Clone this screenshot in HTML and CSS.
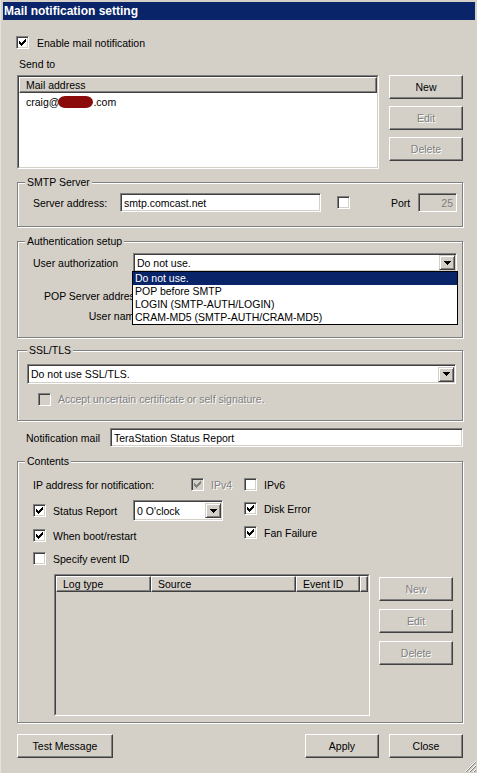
FILE: index.html
```html
<!DOCTYPE html>
<html lang="en">
<head>
<meta charset="utf-8">
<title>Mail notification setting</title>
<link rel="stylesheet" href="styles.css">
</head>
<body>
<div class="window">
  <div class="titlebar">Mail notification setting</div>
  <div class="content">
    <div class="check-row enable">
      <span class="cb"><svg viewBox="0 0 7 7" shape-rendering="crispEdges"><path d="M6 0h1v1h-1z M5 1h2v1h-2z M0 2h1v1h-1z M4 2h3v1h-3z M0 3h2v1h-2z M3 3h3v1h-3z M0 4h5v1h-5z M1 5h3v1h-3z M2 6h1v1h-1z"/></svg></span>
      <span class="cb-text">Enable mail notification</span>
    </div>
    <div class="sendto-label">Send to</div>
    <div class="sendto">
      <div class="sunken-outer mail-list">
        <div class="sunken-inner white">
          <div class="lv-header">
            <div class="lv-col col-full">Mail address</div>
          </div>
          <div class="lv-item">craig@<span class="redact"></span>.com</div>
        </div>
      </div>
      <div class="btn-col">
        <button class="btn">New</button>
        <button class="btn disabled">Edit</button>
        <button class="btn disabled">Delete</button>
      </div>
    </div>

    <fieldset class="group smtp">
      <legend>SMTP Server</legend>
      <div class="smtp-row">
        <span class="lbl-server">Server address:</span>
        <input class="field in-server" type="text" value="smtp.comcast.net">
        <span class="cb cb-ssl-opt"></span>
        <span class="lbl-port">Port</span>
        <input class="field field-dis in-port" type="text" value="25" readonly>
      </div>
    </fieldset>

    <fieldset class="group auth">
      <legend>Authentication setup</legend>
      <div class="auth-row">
        <span class="lbl-auth">User authorization</span>
        <div class="combo combo-auth">
          <span class="combo-text">Do not use.</span>
          <span class="combo-btn"><svg viewBox="0 0 7 4" shape-rendering="crispEdges"><path d="M0 0h7v1h-7z M1 1h5v1h-5z M2 2h3v1h-3z M3 3h1v1h-1z"/></svg></span>
          <ul class="dropdown">
            <li class="sel">Do not use.</li>
            <li>POP before SMTP</li>
            <li>LOGIN (SMTP-AUTH/LOGIN)</li>
            <li>CRAM-MD5 (SMTP-AUTH/CRAM-MD5)</li>
          </ul>
        </div>
      </div>
      <div class="auth-row pop-row">
        <span class="lbl-clip"><span class="lbl-right">POP Server address:</span></span>
      </div>
      <div class="auth-row user-row">
        <span class="lbl-clip"><span class="lbl-right">User name:</span></span>
      </div>
    </fieldset>

    <fieldset class="group ssl">
      <legend>SSL/TLS</legend>
      <div class="combo combo-ssl">
        <span class="combo-text">Do not use SSL/TLS.</span>
        <span class="combo-btn"><svg viewBox="0 0 7 4" shape-rendering="crispEdges"><path d="M0 0h7v1h-7z M1 1h5v1h-5z M2 2h3v1h-3z M3 3h1v1h-1z"/></svg></span>
      </div>
      <div class="check-row ssl-check">
        <span class="cb disabled"></span>
        <span class="cb-text gray">Accept uncertain certificate or self signature.</span>
      </div>
    </fieldset>

    <div class="notif-row">
      <span class="lbl-notif">Notification mail</span>
      <input class="field in-notif" type="text" value="TeraStation Status Report">
    </div>

    <fieldset class="group contents">
      <legend>Contents</legend>
      <div class="contents-top">
        <div class="col-left">
          <div class="c-row r1">
            <span class="lbl-ip">IP address for notification:</span>
            <span class="cb disabled"><svg viewBox="0 0 7 7" shape-rendering="crispEdges"><path d="M6 0h1v1h-1z M5 1h2v1h-2z M0 2h1v1h-1z M4 2h3v1h-3z M0 3h2v1h-2z M3 3h3v1h-3z M0 4h5v1h-5z M1 5h3v1h-3z M2 6h1v1h-1z"/></svg></span>
            <span class="cb-text gray">IPv4</span>
          </div>
          <div class="c-row r2">
            <span class="cb"><svg viewBox="0 0 7 7" shape-rendering="crispEdges"><path d="M6 0h1v1h-1z M5 1h2v1h-2z M0 2h1v1h-1z M4 2h3v1h-3z M0 3h2v1h-2z M3 3h3v1h-3z M0 4h5v1h-5z M1 5h3v1h-3z M2 6h1v1h-1z"/></svg></span>
            <span class="cb-text lbl-status">Status Report</span>
            <div class="combo combo-status">
              <span class="combo-text">0 O'clock</span>
              <span class="combo-btn"><svg viewBox="0 0 7 4" shape-rendering="crispEdges"><path d="M0 0h7v1h-7z M1 1h5v1h-5z M2 2h3v1h-3z M3 3h1v1h-1z"/></svg></span>
            </div>
          </div>
          <div class="c-row r3">
            <span class="cb"><svg viewBox="0 0 7 7" shape-rendering="crispEdges"><path d="M6 0h1v1h-1z M5 1h2v1h-2z M0 2h1v1h-1z M4 2h3v1h-3z M0 3h2v1h-2z M3 3h3v1h-3z M0 4h5v1h-5z M1 5h3v1h-3z M2 6h1v1h-1z"/></svg></span>
            <span class="cb-text">When boot/restart</span>
          </div>
          <div class="c-row r4">
            <span class="cb"></span>
            <span class="cb-text">Specify event ID</span>
          </div>
        </div>
        <div class="col-right">
          <div class="c-row r1">
            <span class="cb"></span>
            <span class="cb-text">IPv6</span>
          </div>
          <div class="c-row rr2">
            <span class="cb"><svg viewBox="0 0 7 7" shape-rendering="crispEdges"><path d="M6 0h1v1h-1z M5 1h2v1h-2z M0 2h1v1h-1z M4 2h3v1h-3z M0 3h2v1h-2z M3 3h3v1h-3z M0 4h5v1h-5z M1 5h3v1h-3z M2 6h1v1h-1z"/></svg></span>
            <span class="cb-text">Disk Error</span>
          </div>
          <div class="c-row rr3">
            <span class="cb"><svg viewBox="0 0 7 7" shape-rendering="crispEdges"><path d="M6 0h1v1h-1z M5 1h2v1h-2z M0 2h1v1h-1z M4 2h3v1h-3z M0 3h2v1h-2z M3 3h3v1h-3z M0 4h5v1h-5z M1 5h3v1h-3z M2 6h1v1h-1z"/></svg></span>
            <span class="cb-text">Fan Failure</span>
          </div>
        </div>
      </div>
      <div class="event-row">
        <div class="sunken-outer event-list">
          <div class="sunken-inner">
            <div class="lv-header">
              <div class="lv-col col-logtype">Log type</div>
              <div class="lv-col col-source">Source</div>
              <div class="lv-col col-eventid">Event ID</div>
              <div class="lv-col col-fill"></div>
            </div>
          </div>
        </div>
        <div class="btn-col event-btns">
          <button class="btn disabled">New</button>
          <button class="btn disabled">Edit</button>
          <button class="btn disabled">Delete</button>
        </div>
      </div>
    </fieldset>

    <div class="bottom-row">
      <button class="btn btn-test">Test Message</button>
      <div class="spacer"></div>
      <button class="btn">Apply</button>
      <button class="btn">Close</button>
    </div>
  </div>
  <svg class="grip" viewBox="0 0 13 13" shape-rendering="crispEdges">
    <path d="M12 1 L1 12" stroke="#ffffff" stroke-width="1"/>
    <path d="M12 2 L2 12" stroke="#808080" stroke-width="1.4"/>
    <path d="M12 5 L5 12" stroke="#ffffff" stroke-width="1"/>
    <path d="M12 6 L6 12" stroke="#808080" stroke-width="1.4"/>
    <path d="M12 9 L9 12" stroke="#ffffff" stroke-width="1"/>
    <path d="M12 10 L10 12" stroke="#808080" stroke-width="1.4"/>
  </svg>
</div>
</body>
</html>
```

FILE: styles.css
```css
* { box-sizing: border-box; }
html, body { margin: 0; padding: 0; }
body {
  width: 477px;
  height: 773px;
  background: #d4d0c8;
  font-family: "Liberation Sans", Arial, sans-serif;
  font-size: 10.5px;
  color: #000;
  overflow: hidden;
}
.window {
  position: relative;
  width: 477px;
  height: 773px;
  padding: 2px 2px 0 3px;
  border-left: 1px solid #e4e2dc;
}
.titlebar {
  height: 18px;
  line-height: 18px;
  background: #0a246a;
  color: #fff;
  font-weight: bold;
  font-size: 12px;
  padding-left: 1px;
  margin-left: -1px;
}
.content { padding: 0 12px 0 13px; }

/* checkbox */
.check-row, .c-row { display: flex; align-items: center; height: 17px; }
.cb {
  flex: none;
  width: 13px;
  height: 13px;
  border: 1px solid;
  border-color: #808080 #fff #fff #808080;
  box-shadow: inset 1px 1px 0 #404040, inset -1px -1px 0 #d4d0c8;
  background: #fff;
  display: flex;
  align-items: center;
  justify-content: center;
}
.cb svg { width: 7px; height: 7px; display: block; fill: #000; }
.cb.disabled { background: #d4d0c8; }
.cb.disabled svg { fill: #808080; }
.cb-text { margin-left: 7px; white-space: nowrap; }
.gray { color: #808080; text-shadow: 1px 1px 0 #fff; }

.enable { margin-top: 14px; margin-left: -1px; }
.enable .cb-text { margin-left: 8px; }
.sendto-label { margin-top: 7px; line-height: 13px; padding-left: 2px; }

/* send to */
.sendto { margin-top: 4px; display: flex; gap: 10px; height: 94px; }
.sunken-outer {
  border: 1px solid;
  border-color: #808080 #fff #fff #808080;
}
.sunken-inner {
  height: 100%;
  border: 1px solid;
  border-color: #404040 #d4d0c8 #d4d0c8 #404040;
}
.sunken-inner.white { background: #fff; }
.mail-list { width: 363px; height: 94px; }
.lv-header { display: flex; height: 16px; }
.lv-col {
  height: 16px;
  line-height: 14px;
  padding-left: 6px;
  background: #d4d0c8;
  border: 1px solid;
  border-color: #fff #404040 #404040 #fff;
  box-shadow: inset -1px -1px 0 #808080;
  white-space: nowrap;
  overflow: hidden;
}
.col-full { flex: 1; }
.lv-item { padding: 3px 0 0 7px; line-height: 13px; white-space: nowrap; }
.redact {
  display: inline-block;
  width: 35px;
  height: 12px;
  vertical-align: -2px;
  background: #8b0a0a;
  border-radius: 7px / 6px;
  margin-left: -1px;
}

/* buttons */
.btn-col { display: flex; flex-direction: column; gap: 7px; width: 74px; }
.btn {
  width: 74px;
  height: 24px;
  margin: 0;
  padding: 0;
  font: inherit;
  color: #000;
  background: #d4d0c8;
  border: 1px solid;
  border-color: #fff #404040 #404040 #fff;
  box-shadow: inset -1px -1px 0 #808080;
  border-radius: 0;
}
.btn.disabled { color: #808080; text-shadow: 1px 1px 0 #fff; }

/* group boxes */
.group {
  margin: 0;
  padding: 0;
  width: 446px;
  min-width: 0;
  border: 1px solid #808080;
  box-shadow: inset 1px 1px 0 #fff, 1px 1px 0 #fff;
}
.group legend {
  font: inherit;
  line-height: 13px;
  padding: 0 2px;
  margin-left: -8px;
  background: #d4d0c8;
}

/* fields */
.field {
  height: 19px;
  margin: 0;
  padding: 0 0 0 3px;
  font: inherit;
  color: #000;
  background: #fff;
  border: 1px solid;
  border-color: #808080 #fff #fff #808080;
  box-shadow: inset 1px 1px 0 #404040, inset -1px -1px 0 #d4d0c8;
  border-radius: 0;
  outline: none;
}
.field-dis { background: #d4d0c8; color: #808080; text-align: right; padding: 0 3px 0 0; }

/* smtp */
.smtp { margin-top: 7px; padding: 4px 0 14px 15px; }
.smtp-row { display: flex; align-items: center; height: 19px; }
.lbl-server { width: 87px; flex: none; }
.in-server { width: 201px; }
.cb-ssl-opt { margin-left: 16px; }
.lbl-port { margin-left: 41px; width: 27px; flex: none; }
.in-port { width: 39px; }

/* auth */
.auth { margin-top: 8px; padding: 5px 0 12px 15px; }
.auth-row { display: flex; align-items: center; height: 19px; }
.pop-row { margin-top: 14px; }
.user-row { margin-top: 2px; height: 18px; }
.lbl-auth { width: 100px; flex: none; }
.lbl-clip { width: 99px; flex: none; overflow: hidden; white-space: nowrap; }
.lbl-right { display: block; width: 110px; text-align: right; white-space: nowrap; }

.combo {
  position: relative;
  display: flex;
  align-items: center;
  background: #fff;
  border: 1px solid;
  border-color: #808080 #fff #fff #808080;
  box-shadow: inset 1px 1px 0 #404040, inset -1px -1px 0 #d4d0c8;
}
.combo-text { flex: 1; padding-left: 3px; white-space: nowrap; }
.combo-btn {
  flex: none;
  width: 16px;
  height: 15px;
  margin-right: 1px;
  background: #d4d0c8;
  border: 1px solid;
  border-color: #d4d0c8 #404040 #404040 #d4d0c8;
  box-shadow: inset 1px 1px 0 #fff, inset -1px -1px 0 #808080;
  display: flex;
  align-items: center;
  justify-content: center;
}
.combo-btn svg { width: 7px; height: 4px; display: block; fill: #000; }
.combo-auth { width: 324px; height: 19px; }
.dropdown {
  position: absolute;
  z-index: 10;
  top: 100%;
  left: -2px;
  width: 326px;
  margin: 0;
  padding: 0;
  list-style: none;
  background: #fff;
  border: 1px solid #000;
}
.dropdown li { height: 13px; line-height: 13px; padding-left: 2px; white-space: nowrap; }
.dropdown li.sel { background: #0a246a; color: #fff; }

/* ssl */
.ssl { margin-top: 6px; padding: 7px 5px 13px 9px; }
.ssl legend { margin-left: 0; }
.combo-ssl { width: 429px; height: 20px; }
.ssl-check { margin-top: 7px; margin-left: 11px; height: 16px; }

/* notification */
.notif-row { display: flex; align-items: center; margin-top: 7px; padding-left: 9px; height: 19px; }
.lbl-notif { width: 84px; flex: none; }
.in-notif { width: 353px; }

/* contents */
.contents { margin-top: 8px; padding: 8px 0 6px 15px; }
.contents-top { display: grid; grid-template-columns: 211px auto; }
.lbl-ip { width: 158px; flex: none; }
.col-left .r2 { margin-top: 7px; height: 21px; }
.col-left .r3 { margin-top: 6px; }
.col-left .r4 { margin-top: 6px; }
.col-right .rr2 { margin-top: 7px; }
.col-right .rr3 { margin-top: 7px; }
.lbl-status { width: 80px; flex: none; }
.combo-status { width: 90px; height: 21px; }
.event-row { display: flex; margin-top: 7px; padding-left: 21px; }
.event-list { width: 316px; height: 142px; }
.event-list .lv-col { padding-left: 6px; }
.col-logtype { width: 95px; }
.col-source { width: 145px; }
.col-eventid { width: 64px; }
.col-fill { flex: 1; }
.event-btns { margin-left: 9px; padding-top: 3px; gap: 8px; }

/* bottom */
.bottom-row { display: flex; gap: 10px; margin-top: 11px; }
.btn-test { width: 96px; }
.spacer { flex: 1; }

.grip {
  position: absolute;
  right: 0;
  bottom: 0;
  width: 13px;
  height: 13px;
}
```
